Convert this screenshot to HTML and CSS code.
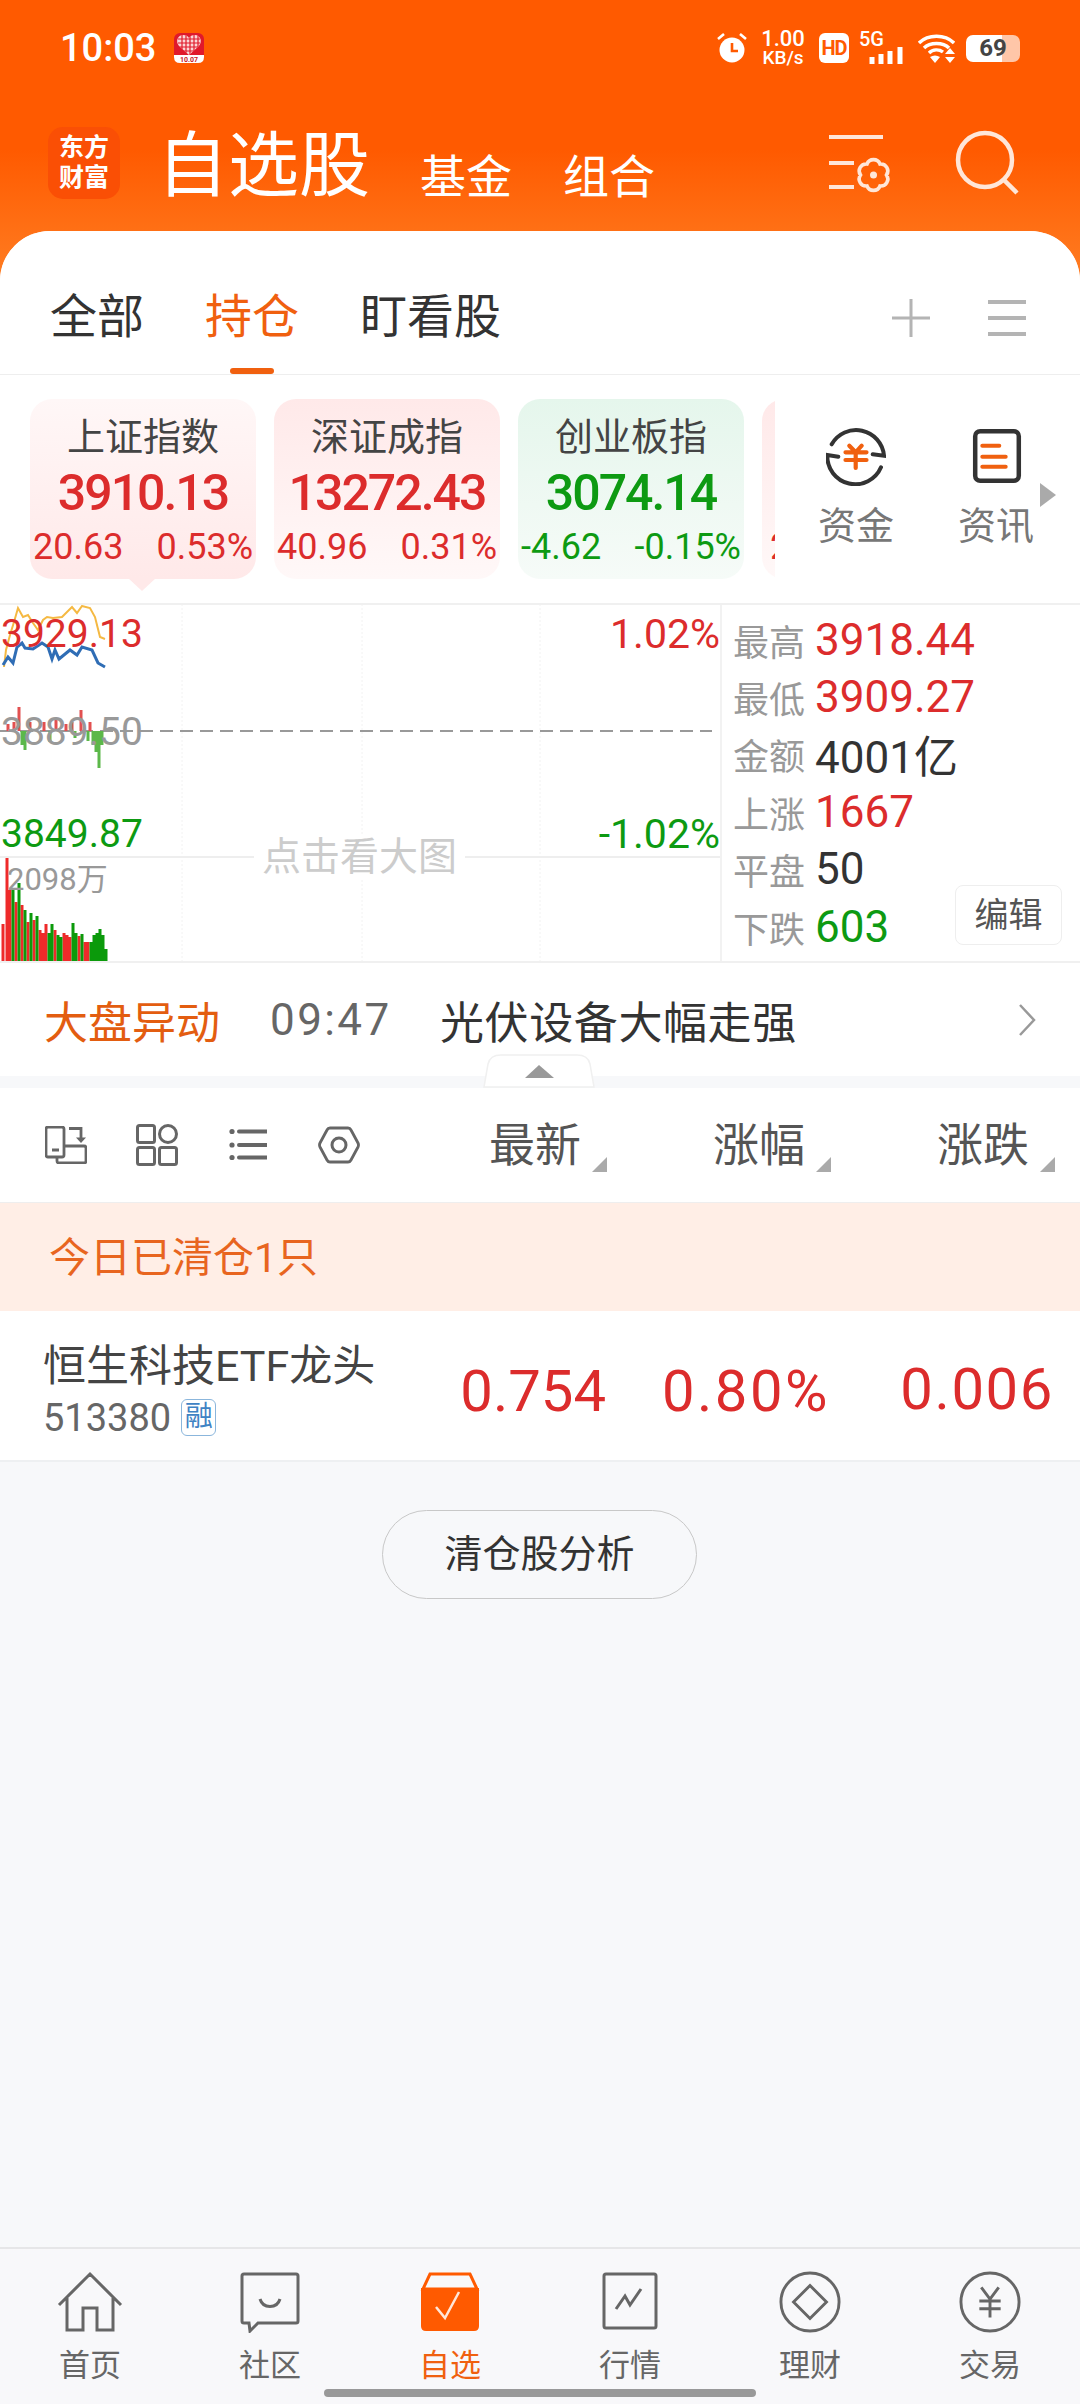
FILE: index.html
```html
<!DOCTYPE html>
<html lang="zh-CN">

<head>
    <meta charset="UTF-8">
    <meta name="viewport" content="width=device-width, initial-scale=1.0">
    <title>自选股</title>
    <link rel="stylesheet" href="styles.css">
</head>

<body>
    <header class="top">
        <div class="status">
            <span class="time">10:03</span>
            <svg class="heart" viewBox="0 0 30 30">
                <defs>
                    <clipPath id="heartclip"><path d="M15 22 L5 13 C1 8 4 2 9 2 C12 2 14 3 15 5 C16 3 18 2 21 2 C26 2 29 8 25 13Z"/></clipPath>
                </defs>
                <rect width="30" height="30" rx="6" fill="#e0192b"/>
                <path d="M0 22H30V24Q30 30 24 30H6Q0 30 0 24Z" fill="#fff"/>
                <path d="M15 22 L5 13 C1 8 4 2 9 2 C12 2 14 3 15 5 C16 3 18 2 21 2 C26 2 29 8 25 13Z" fill="#fbd6d6"/>
                <path d="M4 6H26M4 10H26M4 14H26M4 18H26M8 2V22M12 2V22M16 2V22M20 2V22M24 2V22" clip-path="url(#heartclip)" stroke="#e0192b" stroke-width="1.2"/>
                <text x="15" y="29" class="heart-txt">10.07</text>
            </svg>
            <div class="status-right">
                <svg class="alarm" viewBox="0 0 30 30">
                    <circle cx="15" cy="17" r="12.5" fill="#fff"/>
                    <path d="M15 10V18H21" fill="none" stroke="#ff5a00" stroke-width="2.6"/>
                    <path d="M1 6L7 1M29 6L23 1" stroke="#fff" stroke-width="2.6"/>
                </svg>
                <div class="speed"><span>1.00</span><span>KB/s</span></div>
                <span class="hd">HD</span>
                <div class="signal">
                    <span>5G</span>
                    <svg viewBox="0 0 35 17"><path d="M3 10V17M12 7V17M21 4V17M31 0V17" stroke="#fff" stroke-width="5"/></svg>
                </div>
                <svg class="wifi" viewBox="0 0 37 29">
                    <path d="M1 9C10 0 27 0 36 9M6 14C12 8 25 8 31 14M11 19C15 15 21 15 25 18" fill="none" stroke="#fff" stroke-width="3.4"/>
                    <path d="M12 23L17 29L22 23Q17 20 12 23ZM27 20H37L32 14ZM27 23H37L32 29Z" fill="#fff"/>
                </svg>
                <div class="battery"><span>69</span></div>
            </div>
        </div>
        <div class="titlebar">
            <div class="logo"><span>东方</span><span>财富</span></div>
            <h1>自选股</h1>
            <a class="subnav">基金</a>
            <a class="subnav">组合</a>
            <svg class="top-ico menu-ico" viewBox="0 0 64 60">
                <path d="M0 2H54M0 28H25M0 52H25" fill="none" stroke="#ffe6d8" stroke-width="4"/>
                <path d="M38 29A7 7 0 0 1 51 29A7 7 0 0 1 57.5 40A7 7 0 0 1 51 51A7 7 0 0 1 38 51A7 7 0 0 1 31.500 40A7 7 0 0 1 38 29Z" fill="none" stroke="#ffe6d8" stroke-width="3.6"/>
                <circle cx="44.500" cy="40" r="3.500" fill="#ffe6d8"/>
            </svg>
            <svg class="top-ico search-ico" viewBox="0 0 64 66">
                <circle cx="30" cy="30" r="27" fill="none" stroke="#ffe6d8" stroke-width="4.5"/>
                <path d="M49 50L62 63" stroke="#ffe6d8" stroke-width="4.5"/>
            </svg>
        </div>
    </header>

    <main class="panel">
        <div class="tabs">
            <a class="tab">全部</a>
            <a class="tab active">持仓</a>
            <a class="tab">盯看股</a>
            <svg class="tab-ico plus" viewBox="0 0 38 38"><path d="M19 0V38M0 19H38" stroke="#b4b4b4" stroke-width="3"/></svg>
            <svg class="tab-ico lines" viewBox="0 0 38 38"><path d="M0 3H38M0 19H38M0 35H38" stroke="#b4b4b4" stroke-width="4"/></svg>
        </div>

        <div class="market">
            <div class="strip">
                <div class="card red-rev active">
                    <div class="card-name">上证指数</div>
                    <div class="card-val up">3910.13</div>
                    <div class="card-sub up"><span>20.63</span><span>0.53%</span></div>
                </div>
                <div class="card red">
                    <div class="card-name">深证成指</div>
                    <div class="card-val up">13272.43</div>
                    <div class="card-sub up"><span>40.96</span><span>0.31%</span></div>
                </div>
                <div class="card green">
                    <div class="card-name">创业板指</div>
                    <div class="card-val down">3074.14</div>
                    <div class="card-sub down"><span>-4.62</span><span>-0.15%</span></div>
                </div>
                <div class="card red peek">
                    <div class="card-sub up"><span>2</span></div>
                </div>
            </div>
            <div class="quick">
                <div class="quick-item">
                    <svg viewBox="0 0 60 60">
                        <path d="M5.700 18.300A28 28 0 0 1 58 29.700L46.700 28.300M55 41.300A28 28 0 0 1 1.300 29L12.300 30.700" fill="none" stroke="#333" stroke-width="4" stroke-linecap="round"/>
                        <path d="M23.300 19.700L29.700 26.300L35.700 19.700M19.500 26.300H40.500M19.500 34H40.500M29.700 26.300V42" fill="none" stroke="#f0600f" stroke-width="4.200" stroke-linecap="round"/>
                    </svg>
                    <span>资金</span>
                </div>
                <div class="quick-item">
                    <svg viewBox="0 0 60 60">
                        <rect x="9.200" y="5.200" width="43.600" height="49.600" rx="5" fill="none" stroke="#333" stroke-width="4.500"/>
                        <path d="M16.300 19.700H33.300M16.300 30.700H39.700M16.300 40.700H39.700" stroke="#f0600f" stroke-width="4" stroke-linecap="round"/>
                    </svg>
                    <span>资讯</span>
                </div>
                <div class="quick-arrow"></div>
            </div>
        </div>

        <div class="chart">
            <div class="canvas">
                <svg class="plot" viewBox="0 605 720 356">
                    <path d="M182 604V962M362 604V962M540 604V962" stroke="#f2f2f2" stroke-width="1" stroke-dasharray="2 2"/>
                    <path d="M0 857H720" stroke="#eee" stroke-width="2"/>
                    <path d="M0 731H712" stroke="#999" stroke-width="2" stroke-dasharray="13 7"/>
                    <path d="M4 667L6 650L10 635L14 622L18 608L23 617L28 615L33 623L38 630L43 620L47 617L53 618L62 617L72 607L77 613L82 606L90 608L95 617L100 637L105 639" fill="none" stroke="#f5b942" stroke-width="2"/>
                    <path d="M3 665L8 657L13 663L17 647L22 643L25 648L33 649L42 643L48 647L52 659L55 650L59 659L70 650L77 655L82 647L92 650L98 663L105 667" fill="none" stroke="#2f6db5" stroke-width="3"/>
                    <path d="M8 731V724M14 731V722M19 731V707M30 731V722M44 731V722M56 731V718M66 731V724M72 731V722M81 731V710M90 731V722" fill="none" stroke="#e25050" stroke-width="3"/>
                    <path d="M22 731V745M25 731V750M50 731V742M75 731V738M88 731V741M96 731V752M99 731V768M93 731V745M102 731V745" fill="none" stroke="#5cb84a" stroke-width="3"/>
                    <path d="M3 962V924M7 962V858M10 962V890M16 962V902M22 962V905M28 962V922M34 962V920M40 962V930M43 962V933M46 962V924M55 962V930M64 962V933M67 962V935M70 962V937M79 962V936M85 962V942M88 962V942" fill="none" stroke="#ee2a2a" stroke-width="3"/>
                    <path d="M13 962V890M19 962V883M25 962V910M31 962V913M37 962V916M49 962V933M52 962V924M58 962V935M61 962V937M73 962V923M76 962V933M82 962V934M91 962V942M94 962V935M97 962V933M100 962V929M103 962V935M106 962V949" fill="none" stroke="#0b9a0b" stroke-width="3"/>
                </svg>
                <span class="axis up axis-top">3929.13</span>
                <span class="axis muted axis-mid">3889.50</span>
                <span class="axis down axis-low">3849.87</span>
                <span class="axis up axis-top-r">1.02%</span>
                <span class="axis down axis-low-r">-1.02%</span>
                <span class="vol">2098万</span>
                <span class="bigpic">点击看大图</span>
            </div>
            <div class="stats">
                <div class="stat"><label>最高</label><span class="up">3918.44</span></div>
                <div class="stat"><label>最低</label><span class="up">3909.27</span></div>
                <div class="stat"><label>金额</label><span>4001亿</span></div>
                <div class="stat"><label>上涨</label><span class="up">1667</span></div>
                <div class="stat"><label>平盘</label><span>50</span></div>
                <div class="stat"><label>下跌</label><span class="down">603</span></div>
                <a class="edit">编辑</a>
            </div>
        </div>

        <div class="news">
            <span class="news-tag">大盘异动</span>
            <span class="news-time">09:47</span>
            <span class="news-text">光伏设备大幅走强</span>
            <svg class="chev" viewBox="0 0 18 32"><path d="M2 1L16 16L2 31" fill="none" stroke="#999" stroke-width="2.5"/></svg>
        </div>

        <div class="band">
            <svg class="handle" viewBox="0 0 112 34">
                <path d="M1 33L5 10Q7 1 18 1H94Q105 1 107 10L111 33Z" fill="#fff" stroke="#f0f0f0" stroke-width="1.5"/>
                <path d="M42 24L56 11L71 24Z" fill="#999"/>
            </svg>
        </div>

        <div class="colhead">
            <svg class="view-ico" viewBox="0 0 42 38">
                <path d="M3 1H17Q19 1 19 3V29Q19 31 17 31H3Q1 31 1 29V3Q1 1 3 1ZM7 24H14" fill="none" stroke="#666" stroke-width="2.800"/>
                <path d="M19 20H39Q41 20 41 22V35Q41 37 39 37H14Q12 37 12 35V31" fill="none" stroke="#666" stroke-width="2.800"/>
                <path d="M24 2.500H36V12" fill="none" stroke="#666" stroke-width="2.800"/>
                <path d="M31 11.500H41L36 17Z" fill="#666"/>
            </svg>
            <svg class="view-ico grid-ico" viewBox="0 0 42 42">
                <rect x="1.5" y="1.5" width="17" height="17" rx="2" fill="none" stroke="#666" stroke-width="3"/>
                <circle cx="32" cy="10" r="8.500" fill="none" stroke="#666" stroke-width="3"/>
                <rect x="1.5" y="23.5" width="17" height="17" rx="2" fill="none" stroke="#666" stroke-width="3"/>
                <rect x="23.500" y="23.5" width="17" height="17" rx="2" fill="none" stroke="#666" stroke-width="3"/>
            </svg>
            <svg class="view-ico list-ico" viewBox="0 0 38 38">
                <path d="M10 5.500H38M10 19H38M10 31.500H38" stroke="#666" stroke-width="4" stroke-linecap="round"/>
                <circle cx="3" cy="5.500" r="2.600" fill="#666"/><circle cx="3" cy="19" r="2.600" fill="#666"/><circle cx="3" cy="31.500" r="2.600" fill="#666"/>
            </svg>
            <svg class="view-ico" viewBox="0 0 42 38">
                <path d="M12 2H30Q32 2 33 4L40 17Q41 19 40 21L33 34Q32 36 30 36H12Q10 36 9 34L2 21Q1 19 2 17L9 4Q10 2 12 2Z" fill="none" stroke="#666" stroke-width="2.800"/>
                <circle cx="21" cy="19" r="7" fill="none" stroke="#666" stroke-width="3"/>
            </svg>
            <div class="cols">
                <div class="col"><span>最新</span><i class="sort"></i></div>
                <div class="col"><span>涨幅</span><i class="sort"></i></div>
                <div class="col"><span>涨跌</span><i class="sort"></i></div>
            </div>
        </div>

        <div class="cleared">今日已清仓1只</div>

        <div class="stock">
            <div class="stock-info">
                <div class="stock-name">恒生科技ETF龙头</div>
                <div class="stock-code"><span>513380</span><i class="badge">融</i></div>
            </div>
            <div class="stock-num up">0.754</div>
            <div class="stock-num up wide">0.80%</div>
            <div class="stock-num up lift">0.006</div>
        </div>

        <a class="analyse">清仓股分析</a>
    </main>

    <nav class="bottom">
        <div class="nav-grid">
            <a class="nav-item">
                <svg viewBox="0 0 66 60"><path d="M2 33L33 2L64 33M10 26V58H26V36H40V58H56V26" fill="none" stroke="#666" stroke-width="3"/></svg>
                <span>首页</span>
            </a>
            <a class="nav-item">
                <svg viewBox="0 0 66 60"><path d="M7 2H59Q61 2 61 4V49Q61 51 59 51H21L13 59L12 51H7Q5 51 5 49V4Q5 2 7 2Z" fill="none" stroke="#666" stroke-width="3"/><path d="M23 27C26 37 40 37 43 27" fill="none" stroke="#666" stroke-width="3"/></svg>
                <span>社区</span>
            </a>
            <a class="nav-item active">
                <svg viewBox="0 0 66 60"><path d="M13 2H53L60 17H6Z" fill="none" stroke="#ff5a00" stroke-width="3"/><path d="M4 16H62V54Q62 59 57 59H9Q4 59 4 54Z" fill="#ff5a00"/><path d="M19 35L28 46L42 20" fill="none" stroke="#ffe6d8" stroke-width="2.500"/></svg>
                <span>自选</span>
            </a>
            <a class="nav-item">
                <svg viewBox="0 0 66 60"><rect x="7" y="2" width="52" height="54" rx="2" fill="none" stroke="#666" stroke-width="3"/><path d="M19 37L28 24L33 33L44 17" fill="none" stroke="#666" stroke-width="3"/></svg>
                <span>行情</span>
            </a>
            <a class="nav-item">
                <svg viewBox="0 0 66 64"><circle cx="33" cy="32" r="30" fill="none" stroke="#666" stroke-width="3"/><path d="M33 15L50 32L33 49L16 32Z" fill="none" stroke="#666" stroke-width="3"/></svg>
                <span>理财</span>
            </a>
            <a class="nav-item">
                <svg viewBox="0 0 66 64"><circle cx="33" cy="32" r="30" fill="none" stroke="#666" stroke-width="3"/><path d="M24 17L33 29L42 17M22 31H44M22 39H44M33 29V48" fill="none" stroke="#666" stroke-width="3"/></svg>
                <span>交易</span>
            </a>
        </div>
        <div class="home-bar"></div>
    </nav>
</body>

</html>
```
FILE: styles.css
```css
* {
    box-sizing: border-box;
}

html, body {
    margin: 0;
    padding: 0;
}

body {
    width: 1080px;
    height: 2404px;
    display: flex;
    flex-direction: column;
    overflow: hidden;
    background-color: #f7f8fa;
    font-family: Roboto, "Noto Sans CJK SC", sans-serif;
    color: #333;
}

svg {
    display: block;
}

.up { color: #dc2c2c; }
.down { color: #0d9a12; }
.muted { color: #999; }

/* top orange area */
.top {
    height: 280px;
    flex-shrink: 0;
    background: linear-gradient(#ff5a00 0, #ff5a00 150px, #ff7d22 280px);
    color: #fff;
}

.status {
    height: 96px;
    display: flex;
    align-items: center;
    padding: 0 60px 0 60px;
}

.time {
    font-size: 38px;
    font-weight: 500;
    line-height: 40px;
}

.heart {
    width: 30px;
    height: 30px;
    margin-left: 18px;
}

.heart-txt {
    font-size: 7px;
    font-weight: 700;
    text-anchor: middle;
    fill: #c8161d;
}

.status-right {
    margin-left: auto;
    display: flex;
    align-items: center;
}

.alarm {
    width: 30px;
    height: 30px;
}

.speed {
    width: 46px;
    margin-left: 13px;
    display: flex;
    flex-direction: column;
    align-items: center;
    font-weight: 500;
    line-height: 18px;
}

.speed span:first-child {
    font-size: 22px;
    line-height: 20px;
}

.speed span:last-child {
    font-size: 19px;
}

.hd {
    width: 30px;
    height: 30px;
    margin-left: 13px;
    border-radius: 6px;
    background-color: #fff;
    color: #ff5a00;
    font-size: 20px;
    font-weight: 700;
    line-height: 30px;
    text-align: center;
    letter-spacing: -1px;
}

.signal {
    width: 46px;
    margin-left: 10px;
}

.signal span {
    display: block;
    font-size: 20px;
    font-weight: 500;
    line-height: 15px;
}

.signal svg {
    width: 35px;
    height: 17px;
    margin-left: 10px;
}

.wifi {
    width: 37px;
    height: 29px;
    margin-left: 13px;
}

.battery {
    width: 54px;
    height: 27px;
    margin-left: 11px;
    border-radius: 7px;
    background: linear-gradient(90deg, #fff 0, #fff 66%, #ffc6a8 66%, #ffc6a8 100%);
    color: #444;
    font-size: 24px;
    font-weight: 700;
    line-height: 27px;
    text-align: center;
}

.titlebar {
    height: 110px;
    display: flex;
    align-items: flex-end;
    padding-left: 48px;
}

.logo {
    width: 72px;
    height: 72px;
    margin-bottom: 7px;
    display: flex;
    flex-direction: column;
    justify-content: center;
    align-items: center;
    border-radius: 15px;
    background-color: #fa4f05;
    font-size: 25px;
    font-weight: 700;
    line-height: 30px;
}

.titlebar h1 {
    margin: 0 50px 0 37px;
    font-size: 71px;
    font-weight: 400;
    line-height: 80px;
}

.subnav {
    margin: 0 51px 2px 0;
    font-size: 46px;
    font-weight: 400;
    line-height: 54px;
}

.top-ico {
    flex-shrink: 0;
}

.menu-ico {
    width: 64px;
    height: 60px;
    margin: 0 0 11px 123px;
}

.search-ico {
    width: 64px;
    height: 66px;
    margin: 0 0 10px 62px;
}

/* white panel */
.panel {
    flex: 1;
    margin-top: -49px;
    border-radius: 50px 50px 0 0;
    background-color: #f7f8fa;
    position: relative;
    overflow: hidden;
}

.tabs {
    height: 144px;
    padding: 56px 54px 0 50px;
    display: flex;
    align-items: flex-start;
    gap: 61px;
    background-color: #fff;
    border-bottom: 1px solid #eee;
}

.tab {
    position: relative;
    height: 87px;
    font-size: 47px;
    line-height: 60px;
    color: #333;
}

.tab.active {
    color: #f0600f;
}

.tab.active::after {
    content: "";
    position: absolute;
    left: 25px;
    right: 25px;
    bottom: 0;
    height: 6px;
    border-radius: 3px;
    background-color: #f0600f;
}

.tab-ico {
    width: 38px;
    height: 38px;
    margin-top: 12px;
}

.plus {
    margin-left: auto;
}

.lines {
    margin-left: -3px;
}

.market {
    height: 228px;
    display: flex;
    background-color: #fff;
}

.strip {
    width: 775px;
    padding: 24px 0 0 30px;
    display: flex;
    gap: 18px;
    overflow: hidden;
    flex-shrink: 0;
}

.card {
    position: relative;
    flex: 0 0 226px;
    height: 180px;
    padding-top: 13px;
    border-radius: 22px;
    text-align: center;
}

.card.red-rev { background: linear-gradient(#fff7f7, #ffe9e9); }
.card.red { background: linear-gradient(#ffe9e9, #fff8f8); }
.card.green { background: linear-gradient(#e5f6ec, #f6fbf8); }

.card.peek {
    padding: 125px 0 0 5px;
}

.card.active::after {
    content: "";
    position: absolute;
    left: 98px;
    bottom: -12px;
    width: 28px;
    height: 13px;
    background-color: #ffe9e9;
    clip-path: polygon(0 0, 100% 0, 50% 100%);
}

.card-name {
    font-size: 38px;
    line-height: 50px;
    color: #444;
}

.card-val {
    font-size: 50px;
    font-weight: 500;
    line-height: 62px;
    letter-spacing: -2px;
}

.card-sub {
    display: flex;
    justify-content: space-between;
    padding: 0 3px;
    font-size: 36px;
    line-height: 46px;
}

.quick {
    position: relative;
    flex: 1;
    padding: 51px 0 0 41px;
    display: flex;
    gap: 60px;
}

.quick-item {
    width: 80px;
    display: flex;
    flex-direction: column;
    align-items: center;
}

.quick-item svg {
    width: 60px;
    height: 60px;
}

.quick-item span {
    margin-top: 14px;
    font-size: 38px;
    line-height: 52px;
    color: #777;
    white-space: nowrap;
}

.quick-arrow {
    position: absolute;
    left: 265px;
    top: 108px;
    width: 16px;
    height: 24px;
    background-color: #aaa;
    clip-path: polygon(0 0, 100% 50%, 0 100%);
}

.chart {
    height: 360px;
    display: flex;
    background-color: #fff;
    border-top: 2px solid #f0f0f0;
    border-bottom: 2px solid #f0f0f0;
}

.canvas {
    position: relative;
    width: 720px;
    flex-shrink: 0;
}

.plot {
    position: absolute;
    left: 0;
    top: 0;
    width: 720px;
    height: 356px;
}

.axis {
    position: absolute;
    font-size: 39px;
    line-height: 44px;
}

.axis-top { left: 1px; top: 7px; }
.axis-mid { left: 1px; top: 105px; }
.axis-low { left: 1px; top: 207px; }
.axis-top-r { right: 0; top: 7px; font-size: 41px; }
.axis-low-r { right: 0; top: 207px; font-size: 41px; }

.vol {
    position: absolute;
    left: 7px;
    top: 256px;
    font-size: 31px;
    line-height: 38px;
    color: #999;
}

.bigpic {
    position: absolute;
    left: 254px;
    top: 230px;
    padding: 0 8px;
    background-color: #fff;
    font-size: 39px;
    line-height: 44px;
    color: #ccc;
}

.stats {
    position: relative;
    flex: 1;
    padding: 6px 0 0 11px;
    border-left: 2px solid #f2f2f2;
}

.stat {
    height: 57.4px;
    display: flex;
    align-items: center;
    font-size: 44px;
}

.stat label {
    width: 82px;
    font-size: 36px;
    color: #999;
}

.edit {
    position: absolute;
    right: 18px;
    bottom: 16px;
    width: 107px;
    height: 60px;
    border: 1px solid #eee;
    border-radius: 8px;
    font-size: 34px;
    line-height: 58px;
    text-align: center;
    color: #555;
}

.news {
    height: 113px;
    padding: 0 44px;
    display: flex;
    align-items: center;
    font-size: 44px;
    background-color: #fff;
}

.news-tag {
    width: 226px;
    color: #e35d10;
}

.news-time {
    width: 170px;
    letter-spacing: 2.4px;
    color: #666;
}

.news-text {
    letter-spacing: 0.6px;
    color: #333;
}

.chev {
    width: 18px;
    height: 32px;
    margin-left: auto;
}

.band {
    position: relative;
    height: 12px;
    background-color: #f7f8fa;
}

.handle {
    position: absolute;
    left: 483px;
    top: -22px;
    width: 112px;
    height: 34px;
}

.colhead {
    height: 115px;
    padding-left: 45px;
    display: flex;
    align-items: center;
    gap: 49px;
    background-color: #fff;
    border-bottom: 1px solid #eee;
}

.view-ico {
    width: 42px;
    height: 38px;
}

.grid-ico {
    height: 42px;
}

.list-ico {
    width: 38px;
    margin: 0 2px;
}

.cols {
    margin-left: auto;
    padding-right: 25px;
    display: flex;
    gap: 106px;
}

.col {
    display: flex;
    gap: 11px;
    font-size: 46px;
    line-height: 56px;
    color: #555;
}

.sort {
    width: 15px;
    height: 15px;
    margin-top: 40px;
    background-color: #aaa;
    clip-path: polygon(100% 0, 100% 100%, 0 100%);
}

.cleared {
    height: 108px;
    padding-left: 49px;
    background-color: #ffeee6;
    font-size: 41px;
    line-height: 110px;
    color: #e8651f;
}

.stock {
    height: 151px;
    padding-right: 26px;
    display: grid;
    grid-template-columns: 382px 224px 224px 224px;
    align-items: center;
    background-color: #fff;
    border-bottom: 2px solid #eef0f2;
}

.stock-info {
    padding: 6px 0 0 43px;
}

.stock-name {
    font-size: 43px;
    line-height: 58px;
    white-space: nowrap;
    color: #444;
}

.stock-code {
    display: flex;
    align-items: center;
    font-size: 38px;
    line-height: 46px;
    color: #666;
}

.badge {
    width: 35px;
    height: 37px;
    margin-left: 10px;
    border: 1px solid #8bb6dc;
    border-radius: 6px;
    font-size: 28px;
    font-style: normal;
    line-height: 34px;
    text-align: center;
    color: #3f83c4;
}

.stock-num {
    margin-top: 11px;
    font-size: 58px;
    line-height: 70px;
    text-align: right;
}

.wide {
    letter-spacing: 2.5px;
}

.lift {
    margin-top: 6px;
    letter-spacing: 1.6px;
}

.analyse {
    display: block;
    width: 315px;
    height: 89px;
    margin: 48px 0 0 382px;
    border: 1px solid #c8c8c8;
    border-radius: 45px;
    font-size: 38px;
    line-height: 87px;
    text-align: center;
    color: #333;
}

/* bottom nav */
.bottom {
    height: 157px;
    flex-shrink: 0;
    background-color: #f8f8fa;
    border-top: 2px solid #e6e6e8;
}

.nav-grid {
    display: grid;
    grid-template-columns: repeat(6, 180px);
    padding-top: 22px;
}

.nav-item {
    display: flex;
    flex-direction: column;
    align-items: center;
    font-size: 31px;
    line-height: 40px;
    color: #666;
}

.nav-item svg {
    width: 66px;
    height: 62px;
}

.nav-item span {
    margin-top: 13px;
}

.nav-item.active {
    color: #f0600f;
}

.home-bar {
    width: 432px;
    height: 8px;
    margin: 3px 0 0 324px;
    border-radius: 4px;
    background-color: #999;
}
```
